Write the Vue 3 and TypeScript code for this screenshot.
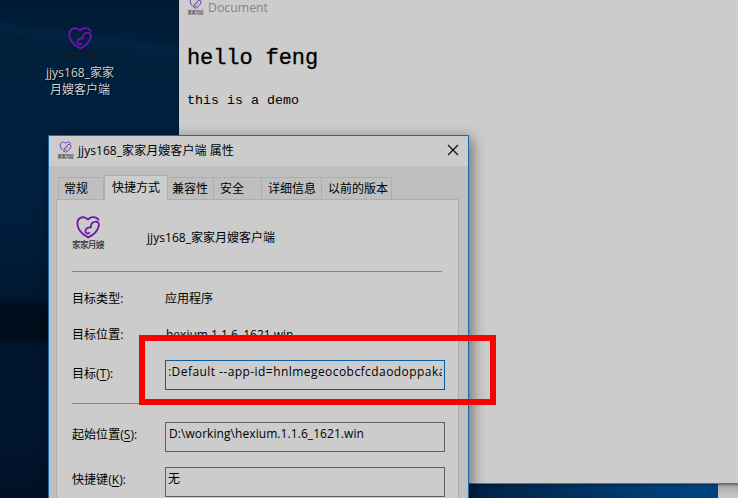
<script setup lang="ts">
import { h } from 'vue'

interface Tab { label: string; width: number; active?: boolean }

const tabs: Tab[] = [
  { label: '常规', width: 46 },
  { label: '快捷方式', width: 64, active: true },
  { label: '兼容性', width: 46 },
  { label: '安全', width: 48 },
  { label: '详细信息', width: 60 },
  { label: '以前的版本', width: 70 },
]

const Logo = (props: { color: string; ink: string }) =>
  h('svg', { viewBox: '0 0 34 36' }, [
    h('g', { fill: 'none', stroke: props.color, 'stroke-width': 1.8, 'stroke-linecap': 'round', 'stroke-linejoin': 'round' }, [
      h('path', { d: 'M27.5 4.8C26 2.6 23.5 2 21.3 2.2C19.3 2.4 18 3.4 17 4.6C15 2.2 11.4 1.6 9 3C5.6 5 5.8 10.5 8 14.2C10 17.6 13.5 20.6 17.3 22.4C22.5 20 26.8 15.6 27.8 10.8C28.3 8 26.6 6.4 24.4 6.6C21 6.8 19.4 9.4 20 12.4C17.5 12 14.6 13.4 14.4 16C14.2 18.8 17 19 18.3 17.8' }),
    ]),
    h('text', { x: 1, y: 33.3, 'font-size': 8.8, 'font-weight': 500, 'font-family': '"Noto Sans CJK SC", sans-serif', fill: props.ink, textLength: 32.5 }, '家家月嫂'),
  ])
Logo.props = ['color', 'ink']
</script>

<template>
  <main class="desktop">
    <div class="shortcut">
      <Logo class="shortcut-logo" color="#7411ae" ink="#141c2a" />
      <span><i class="latin">jjys168_</i>家家<br>月嫂客户端</span>
    </div>

    <div class="behind"></div>
    <section class="browser">
      <header>
        <Logo class="mini" color="#6b24a0" ink="#555" />
        <span>Document</span>
      </header>
      <h1>hello feng</h1>
      <p>this is a demo</p>
    </section>

    <section class="dialog">
      <header class="titlebar">
        <Logo class="mini" color="#6b24a0" ink="#444" />
        <span class="title"><i class="latin">jjys168_</i>家家月嫂客户端 属性</span>
        <svg class="close" viewBox="0 0 12 12"><path d="M1 1L11 11M11 1L1 11" /></svg>
      </header>
      <nav class="tabs">
        <div v-for="tab in tabs" :key="tab.label" class="tab" :class="{ active: tab.active }" :style="{ width: tab.width + 'px' }">{{ tab.label }}</div>
      </nav>
      <div class="panel">
        <div class="identity">
          <Logo class="big" color="#6c18a5" ink="#333" />
          <span><i class="latin">jjys168_</i>家家月嫂客户端</span>
        </div>
        <hr>
        <div class="row kind"><label>目标类型:</label><span>应用程序</span></div>
        <div class="row place"><label>目标位置:</label><span class="location">hexium.1.1.6_1621.win</span></div>
        <div class="row target"><label>目标(<u>T</u>):</label><div class="field focus"><span class="clip"><span class="target-text">:Default --app-id=hnlmegeocobcfcdaodoppaka</span></span></div></div>
        <hr>
        <div class="row start"><label>起始位置(<u>S</u>):</label><div class="field"><span class="path">D:\working\hexium.1.1.6_1621.win</span></div></div>
        <div class="row"><label>快捷键(<u>K</u>):</label><div class="field none">无</div></div>
      </div>
    </section>
    <div class="highlight"></div>
  </main>
</template>

<style>
body { margin: 0; overflow: hidden; }
</style>

<style scoped>
* { box-sizing: border-box; }
.desktop {
  position: relative;
  width: 738px;
  height: 498px;
  overflow: hidden;
  font: 12px/16px "Open Sans", "Noto Sans CJK SC", sans-serif;
  color: #000;
  background:
    linear-gradient(100deg, transparent 0 62%, #001f3f 63%, #00427e 96%) 0 483px / 718px 15px no-repeat,
    linear-gradient(8deg, transparent 38%, #05386633 50%, transparent 62%) 0 10px / 180px 60px no-repeat,
    linear-gradient(#001a34 0, #001d39 30px, #00203c 60px, #002040 130px, #001e3c 230px, #00172f 298px, #000d1c 306px, #000c1b 336px, #00152d 346px, #00162f 430px, #001026 498px);
}
.latin { font-style: normal; letter-spacing: .06px; }
.shortcut {
  position: absolute;
  left: 35px;
  top: 26px;
  width: 90px;
  display: flex;
  flex-direction: column;
  align-items: center;
  text-align: center;
  line-height: 17px;
  color: #d3d3d3;
  text-shadow: 1px 1px 1px #000;
}
.shortcut-logo { width: 34px; height: 36px; margin-bottom: 2px; text-shadow: none; }
.behind {
  position: absolute;
  left: 718px;
  top: 480px;
  width: 30px;
  height: 20px;
  background: linear-gradient(#888 3px, #aaa 6px, #c6c6c6 16px);
}
.browser {
  position: absolute;
  left: 179px;
  top: -3px;
  width: 580px;
  height: 487px;
  padding-left: 8px;
  background: #ccc;
  border-bottom: 1px solid #667078;
  box-shadow: 0 0 3px #0008;
}
.browser header { display: flex; height: 22px; gap: 5px; color: #858585; font-size: 12.3px; line-height: 22px; }
.mini { width: 17px; height: 18px; margin-right: -1px; }
.browser h1, .browser p { margin: 0; font-family: "Liberation Mono", monospace; font-weight: 400; }
.browser h1 { margin-top: 26px; font-size: 22px; line-height: 28px; letter-spacing: -.1px; -webkit-text-stroke: .3px #000; }
.browser p { margin-top: 18px; font-size: 13.33px; line-height: 20px; }
.dialog {
  position: absolute;
  left: 48px;
  top: 135px;
  width: 421px;
  height: 380px;
  border: 1px solid #1769ad;
  background: #bfbfbf;
  box-shadow: 3px 3px 13px #0007;
}
.titlebar { display: flex; align-items: center; height: 30px; padding: 0 9px 0 8px; background: #ccc; }
.mini { margin-top: -2px; }
.browser .mini { margin-top: 0; }
.title { margin-left: 5px; flex: 1; white-space: nowrap; letter-spacing: .06px; }
.close { width: 12px; height: 12px; margin-top: -2px; fill: none; stroke: #111; stroke-width: 1.2; }
.tabs { display: flex; align-items: flex-end; height: 34px; padding-left: 9px; }
.tab {
  height: 23px;
  border: 1px solid #adadad;
  border-left-width: 0;
  border-bottom: 0;
  padding-left: 4px;
  line-height: 21px;
  white-space: nowrap;
}
.tab:first-child { border-left-width: 1px; padding-left: 5px; }
.tab:nth-child(4) { padding-left: 6px; }
.tab:nth-child(5), .tab:nth-child(6) { padding-left: 6px; }
.tab.active { position: relative; z-index: 1; height: 25px; padding-left: 7px; border-left-width: 1px; background: #ccc; line-height: 23px; }
.panel { width: 403px; height: 320px; margin: -1px 0 0 7px; padding: 0 15px; border: 1px solid #adadad; background: #ccc; }
.identity { display: flex; align-items: center; height: 71px; gap: 42px; padding-top: 5px; }
.big { width: 34px; height: 36px; margin-left: -1px; margin-top: -10px; }
hr { width: 370px; height: 1px; margin: 0; border: 0; background: #858585; }
.row { display: flex; align-items: center; height: 45px; }
.row label { width: 93px; flex: none; letter-spacing: .06px; }
.location { margin-left: 1px; }
.kind { height: 37px; margin-top: 8px; }
.place { height: 36px; }
.target { height: 40px; margin-top: 1px; margin-bottom: 9px; }
.target label { margin-top: -1px; }
.target .field { margin-top: 2px; }
.start { margin-top: 11px; height: 44px; }
.start label { margin-top: -4px; }
.start + .row label { margin-top: -3px; }
.start + .row .field { margin-top: 1px; }
.field { flex: none; width: 280px; height: 30px; padding: 3px; border: 1px solid #606060; }
.field.focus { border-color: #0760a6; }
.field.none { padding-left: 2px; }
.clip { display: block; overflow: hidden; width: 273px; white-space: nowrap; }
.target-text { margin-left: -1px; letter-spacing: .44px; }
.path { letter-spacing: .07px; }
u { text-underline-offset: 2px; }
.highlight { position: absolute; left: 139px; top: 335px; width: 357px; height: 70px; border: 6px solid #f00; }
</style>
